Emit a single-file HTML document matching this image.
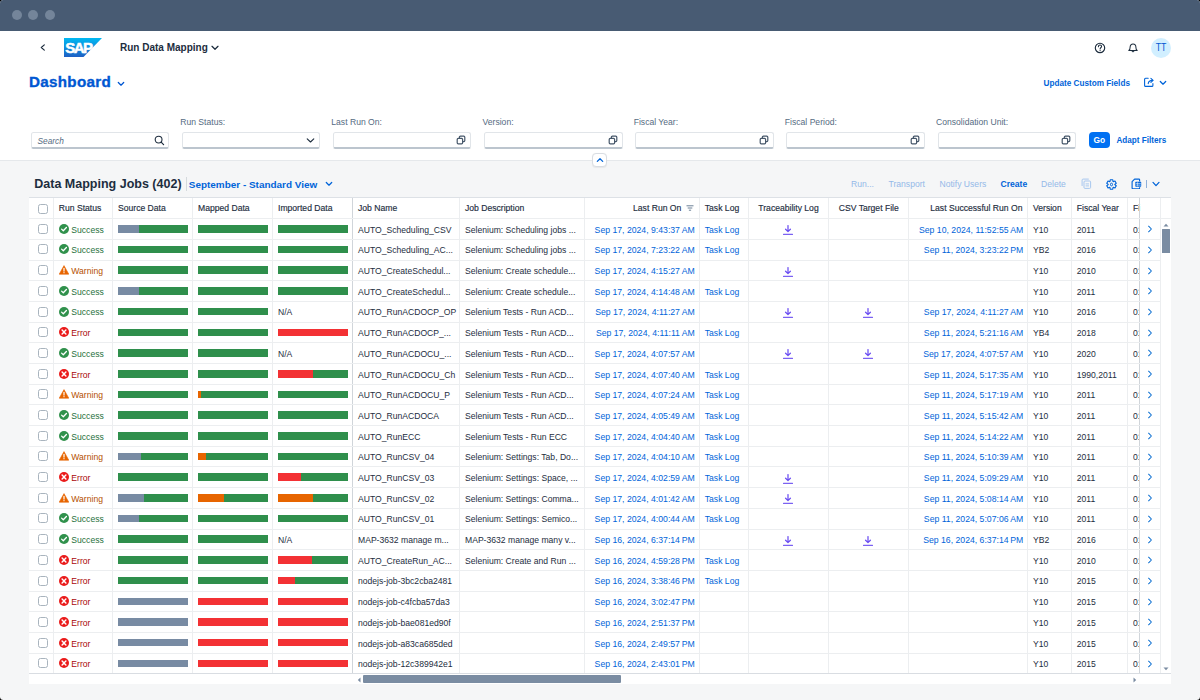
<!DOCTYPE html>
<html><head><meta charset="utf-8">
<style>
*{box-sizing:border-box;margin:0;padding:0}
html,body{width:1200px;height:700px;overflow:hidden;background:#000}
body{font-family:"Liberation Sans",sans-serif;color:#1d2d3e;position:relative}
#win{position:absolute;left:0;top:0;width:1200px;height:700px;border-radius:3.5px;overflow:hidden;background:#f5f6f7}
.a{position:absolute;white-space:nowrap}
#tbar{position:absolute;left:0;top:0;width:1200px;height:31px;background:#485b73}
.dot{position:absolute;top:9.8px;width:10px;height:10px;border-radius:50%;background:#74859a}
#shell{position:absolute;left:0;top:31px;width:1200px;height:130px;background:#fff;border-bottom:1px solid #e5e8eb}
.lbl{position:absolute;top:117.3px;font-size:8.6px;color:#556b82;white-space:nowrap}
.inp{position:absolute;top:132px;height:16.8px;width:138.5px;background:#fff;border:1px solid #e1e5e9;border-bottom:2px solid #bcc5ce;border-radius:2.5px}
.inp svg{position:absolute}
#card{position:absolute;left:29px;top:196.8px;width:1142.3px;height:487.2px;background:#fff}
#toolbarbg{position:absolute;left:29px;top:170px;width:1142px;height:27.5px;background:#f5f6f7}
.row{position:absolute;left:29px;width:1142px}
.thead{position:absolute;left:29px;width:1142px;background:#fff;border-top:1px solid #dde1e6}
.ht{position:absolute;height:20.7px;line-height:20.7px;font-size:8.6px;color:#1d2d3e;white-space:nowrap;-webkit-text-stroke:0.15px #1d2d3e}
.ht.r{text-align:right}
.ht.c{text-align:center}
.fil{position:absolute;width:8px;height:6px}
.cb{position:absolute;width:10px;height:10px;border:1px solid #a9b4be;border-radius:2.5px;background:#fff}
.st{position:absolute;top:1.5px;height:20.69px;line-height:21.5px;font-size:8.6px;white-space:nowrap;padding-left:12.6px}
.st .si{position:absolute;left:0;top:4.1px;width:10px;height:10px}
.ok{color:#256f3a}.er{color:#aa0808}.wa{color:#b44f00}
.bar{position:absolute;top:6.9px;width:69.6px;height:7.6px;display:flex}
.bar i{display:block;height:100%}
.tx{position:absolute;top:1.5px;height:20.69px;line-height:21.5px;font-size:8.6px;white-space:nowrap;color:#1d2d3e}
.tx.r{text-align:right}
.dt{font-size:8.68px}
.lk{color:#0064d9}
.clip{overflow:hidden}
.dlw{position:absolute;top:7.1px;width:10px;height:10px}
.dl{width:10px;height:10px;display:block}
.nav{position:absolute;top:7px;width:6px;height:8px}
.vl{position:absolute;top:197.5px;height:476px;width:1px;background:#eceef0}
.vd{background:#d0d5da}
.hl{position:absolute;left:29px;width:1142px;height:1px;background:#eceef0}
</style></head><body>
<div id="win">
<div id="tbar">
 <div class="dot" style="left:11.75px"></div>
 <div class="dot" style="left:28.1px"></div>
 <div class="dot" style="left:44.6px"></div>
</div>
<div id="shell">
 <!-- back chevron -->
 <svg class="a" style="left:39px;top:11px" width="8" height="10" viewBox="0 0 8 10"><path d="M5.3 2.9 L2.3 5.5 L5.3 8.1" stroke="#1d2d3e" stroke-width="1.2" fill="none" stroke-linecap="round" stroke-linejoin="round"/></svg>
 <!-- SAP logo -->
 <svg class="a" style="left:64px;top:7px" width="38" height="19" viewBox="0 0 38 19">
  <defs><linearGradient id="sg" x1="0" y1="0" x2="0" y2="1"><stop offset="0" stop-color="#00b9f2"/><stop offset="1" stop-color="#1e5fc4"/></linearGradient></defs>
  <path d="M0 0 H38 L19.5 19 H0 Z" fill="url(#sg)"/>
  <text x="1.2" y="15.1" font-family="Liberation Sans" font-weight="bold" font-size="15" fill="#fff" stroke="#fff" stroke-width="0.5" letter-spacing="-1.5">SAP</text>
 </svg>
 <div class="a" style="left:120px;top:11.3px;font-size:10px;font-weight:bold;color:#1d2d3e">Run Data Mapping</div>
 <svg class="a" style="left:211px;top:14px" width="8" height="6" viewBox="0 0 8 6"><path d="M1 1.3 L4 4.3 L7 1.3" stroke="#1d2d3e" stroke-width="1.25" fill="none" stroke-linecap="round" stroke-linejoin="round"/></svg>
 <!-- help -->
 <svg class="a" style="left:1094px;top:11px" width="12" height="12" viewBox="0 0 12 12"><circle cx="6" cy="5.9" r="4.7" stroke="#1d2d3e" stroke-width="1.15" fill="none"/><path d="M4.4 4.7 C4.4 3.5 5.2 3 6 3 C6.9 3 7.6 3.6 7.6 4.5 C7.6 5.5 6.1 5.6 6.1 7" stroke="#1d2d3e" stroke-width="1.05" fill="none" stroke-linecap="round"/><circle cx="6.1" cy="8.6" r="0.65" fill="#1d2d3e"/></svg>
 <!-- bell -->
 <svg class="a" style="left:1127px;top:11px" width="12" height="12" viewBox="0 0 12 12"><path d="M1.8 8.5 C2.9 7.8 3.1 6.9 3.1 5.2 C3.1 3.2 4.3 1.9 6 1.9 C7.7 1.9 8.9 3.2 8.9 5.2 C8.9 6.9 9.1 7.8 10.2 8.5 Z" stroke="#1d2d3e" stroke-width="1.05" fill="none" stroke-linejoin="round"/><path d="M4.8 9.2 C5.1 10.4 6.9 10.4 7.2 9.2 Z" fill="#1d2d3e" stroke="#1d2d3e" stroke-width="0.4"/></svg>
 <div class="a" style="left:1151.2px;top:6.6px;width:20px;height:20px;border-radius:50%;background:#d1efff;color:#0057d2;font-size:10px;text-align:center;line-height:20px"><span style="display:inline-block;transform:scaleX(0.88)">TT</span></div>

 <div class="a" style="left:29px;top:42.3px;font-size:15.2px;font-weight:bold;color:#0057d2;letter-spacing:0.3px;-webkit-text-stroke:0.35px #0057d2">Dashboard</div>
 <svg class="a" style="left:117.3px;top:50px" width="8" height="6" viewBox="0 0 8 6"><path d="M1.3 1.5 L4 4.2 L6.7 1.5" stroke="#0057d2" stroke-width="1.25" fill="none" stroke-linecap="round" stroke-linejoin="round"/></svg>

 <div class="a" style="left:1043.5px;top:47.8px;font-size:8.2px;font-weight:bold;color:#0064d9">Update Custom Fields</div>
 <svg class="a" style="left:1143px;top:45px" width="12" height="12" viewBox="0 0 12 12"><path d="M5.2 2.3 H2.6 Q1.6 2.3 1.6 3.3 V9.4 Q1.6 10.4 2.6 10.4 H8.9 Q9.9 10.4 9.9 9.4 V7.6" stroke="#0064d9" stroke-width="1.1" fill="none" stroke-linecap="round"/><path d="M5.2 7.6 Q5.6 4.4 9.6 4.4" stroke="#0064d9" stroke-width="1.1" fill="none" stroke-linecap="round"/><path d="M7.9 2.4 L10.1 4.4 L7.9 6.4" stroke="#0064d9" stroke-width="1.1" fill="none" stroke-linecap="round" stroke-linejoin="round"/></svg>
 <svg class="a" style="left:1158.7px;top:48.8px" width="8" height="6" viewBox="0 0 8 6"><path d="M1.3 1.5 L4 4.2 L6.7 1.5" stroke="#0064d9" stroke-width="1.25" fill="none" stroke-linecap="round" stroke-linejoin="round"/></svg>
</div>

<!-- filter labels/inputs (page coords) -->
<div class="lbl" style="left:180.2px">Run Status:</div>
<div class="lbl" style="left:331.3px">Last Run On:</div>
<div class="lbl" style="left:482.5px">Version:</div>
<div class="lbl" style="left:633.7px">Fiscal Year:</div>
<div class="lbl" style="left:784.8px">Fiscal Period:</div>
<div class="lbl" style="left:936px">Consolidation Unit:</div>

<div class="inp" style="left:30.5px"><div class="a" style="left:6px;top:2.5px;font-size:8.3px;font-style:italic;color:#556b82">Search</div>
 <svg style="left:122px;top:2.2px" width="11" height="11" viewBox="0 0 11 11"><circle cx="4.6" cy="4.6" r="3.4" stroke="#1d2d3e" stroke-width="1.1" fill="none"/><path d="M7.1 7.1 L9.6 9.6" stroke="#1d2d3e" stroke-width="1.2" stroke-linecap="round"/></svg></div>
<div class="inp" style="left:181.6px"><svg style="left:123px;top:3.5px" width="9" height="7" viewBox="0 0 9 7"><path d="M1.2 1.8 L4.5 5 L7.8 1.8" stroke="#1d2d3e" stroke-width="1.1" fill="none" stroke-linecap="round" stroke-linejoin="round"/></svg></div>
<div class="inp" style="left:332.8px"></div>
<div class="inp" style="left:484px"></div>
<div class="inp" style="left:635.2px"></div>
<div class="inp" style="left:786.4px"></div>
<div class="inp" style="left:937.6px"></div>
<svg class="a" style="left:456.3px;top:134.8px" width="10" height="10" viewBox="0 0 10 10"><rect x="1.2" y="3.4" width="5.4" height="5.4" rx="1" stroke="#46576a" stroke-width="1.2" fill="none"/><path d="M3.4 3.4 V2.2 Q3.4 1.2 4.4 1.2 H7.8 Q8.8 1.2 8.8 2.2 V5.6 Q8.8 6.6 7.8 6.6 H6.6" stroke="#46576a" stroke-width="1.2" fill="none"/></svg><svg class="a" style="left:607.5px;top:134.8px" width="10" height="10" viewBox="0 0 10 10"><rect x="1.2" y="3.4" width="5.4" height="5.4" rx="1" stroke="#46576a" stroke-width="1.2" fill="none"/><path d="M3.4 3.4 V2.2 Q3.4 1.2 4.4 1.2 H7.8 Q8.8 1.2 8.8 2.2 V5.6 Q8.8 6.6 7.8 6.6 H6.6" stroke="#46576a" stroke-width="1.2" fill="none"/></svg><svg class="a" style="left:758.7px;top:134.8px" width="10" height="10" viewBox="0 0 10 10"><rect x="1.2" y="3.4" width="5.4" height="5.4" rx="1" stroke="#46576a" stroke-width="1.2" fill="none"/><path d="M3.4 3.4 V2.2 Q3.4 1.2 4.4 1.2 H7.8 Q8.8 1.2 8.8 2.2 V5.6 Q8.8 6.6 7.8 6.6 H6.6" stroke="#46576a" stroke-width="1.2" fill="none"/></svg><svg class="a" style="left:909.9px;top:134.8px" width="10" height="10" viewBox="0 0 10 10"><rect x="1.2" y="3.4" width="5.4" height="5.4" rx="1" stroke="#46576a" stroke-width="1.2" fill="none"/><path d="M3.4 3.4 V2.2 Q3.4 1.2 4.4 1.2 H7.8 Q8.8 1.2 8.8 2.2 V5.6 Q8.8 6.6 7.8 6.6 H6.6" stroke="#46576a" stroke-width="1.2" fill="none"/></svg><svg class="a" style="left:1061.1px;top:134.8px" width="10" height="10" viewBox="0 0 10 10"><rect x="1.2" y="3.4" width="5.4" height="5.4" rx="1" stroke="#46576a" stroke-width="1.2" fill="none"/><path d="M3.4 3.4 V2.2 Q3.4 1.2 4.4 1.2 H7.8 Q8.8 1.2 8.8 2.2 V5.6 Q8.8 6.6 7.8 6.6 H6.6" stroke="#46576a" stroke-width="1.2" fill="none"/></svg>
<div class="a" style="left:1088.8px;top:132.1px;width:20.8px;height:16.2px;border-radius:4px;background:#0070f2;color:#fff;font-size:8.4px;font-weight:bold;text-align:center;line-height:16.2px">Go</div>
<div class="a" style="left:1116.5px;top:135.6px;font-size:8.15px;font-weight:bold;color:#0064d9">Adapt Filters</div>

<!-- collapse button -->
<div class="a" style="left:592.2px;top:152.5px;width:15px;height:14.8px;border-radius:4px;background:#fff;border:1px solid #d9dde2;box-shadow:0 0.5px 1px rgba(0,0,0,0.06)"></div>
<svg class="a" style="left:596px;top:156.5px" width="8" height="6" viewBox="0 0 8 6"><path d="M1.3 4.4 L4 1.7 L6.7 4.4" stroke="#0064d9" stroke-width="1.25" fill="none" stroke-linecap="round" stroke-linejoin="round"/></svg>

<!-- table card -->
<div id="card"></div>
<div class="a" style="left:34.3px;top:177.3px;font-size:12.5px;font-weight:bold;color:#1d2d3e">Data Mapping Jobs (402)</div>
<div class="a" style="left:185.5px;top:177px;width:1px;height:14px;background:#d5dadd"></div>
<div class="a" style="left:188.8px;top:179.4px;font-size:9.95px;font-weight:bold;color:#0064d9">September - Standard View</div>
<svg class="a" style="left:324.5px;top:180.5px" width="8" height="6" viewBox="0 0 8 6"><path d="M1.3 1.5 L4 4.2 L6.7 1.5" stroke="#0064d9" stroke-width="1.25" fill="none" stroke-linecap="round" stroke-linejoin="round"/></svg>

<div class="a" style="left:851px;top:179px;font-size:8.6px;color:#94b9e8">Run...</div>
<div class="a" style="left:888.5px;top:179px;font-size:8.6px;color:#94b9e8">Transport</div>
<div class="a" style="left:939.5px;top:179px;font-size:8.6px;color:#94b9e8">Notify Users</div>
<div class="a" style="left:1000.5px;top:179px;font-size:8.6px;font-weight:bold;color:#0064d9">Create</div>
<div class="a" style="left:1041px;top:179px;font-size:8.6px;color:#94b9e8">Delete</div>
<svg class="a" style="left:1081px;top:178px" width="11" height="11" viewBox="0 0 11 11"><path d="M1.1 7.6 V2.1 Q1.1 1.1 2.1 1.1 H7.4" stroke="#a3c5ee" stroke-width="0.95" fill="none" stroke-linecap="round"/><rect x="3" y="3" width="6.6" height="7.4" rx="1" stroke="#a3c5ee" stroke-width="0.95" fill="none"/><path d="M5 5.9 H7.6 M5 7.9 H7.6" stroke="#a3c5ee" stroke-width="0.9" stroke-linecap="round"/></svg><svg class="a" style="left:1106px;top:178.5px" width="11" height="11" viewBox="0 0 11 11"><path d="M3.92 2.60 L4.24 0.76 L6.76 0.76 L7.08 2.60 L7.22 2.68 L8.97 2.04 L10.23 4.22 L8.80 5.42 L8.80 5.58 L10.23 6.78 L8.97 8.96 L7.22 8.32 L7.08 8.40 L6.76 10.24 L4.24 10.24 L3.92 8.40 L3.78 8.32 L2.03 8.96 L0.77 6.78 L2.20 5.58 L2.20 5.42 L0.77 4.22 L2.03 2.04 L3.78 2.68 Z" stroke="#0064d9" stroke-width="1.15" fill="none" stroke-linejoin="round"/><ellipse cx="5.5" cy="5.5" rx="1.05" ry="1.35" stroke="#0064d9" stroke-width="1" fill="none"/></svg><svg class="a" style="left:1131px;top:178px" width="11" height="11" viewBox="0 0 11 11"><path d="M8.6 3.4 V1.8 Q8.6 1.1 7.9 1.1 H3.6 L1.1 3.6 V10 Q1.1 10.7 1.8 10.7 H7.9 Q8.6 10.7 8.6 10 V9.2" stroke="#0064d9" stroke-width="1.15" fill="none" stroke-linejoin="round"/><rect x="4.3" y="3.8" width="5.9" height="4.9" rx="0.6" fill="#0064d9"/><path d="M4.8 5.45 H9.8 M4.8 7.1 H9.8 M6.6 4.2 V8.4" stroke="#fff" stroke-width="0.55"/></svg><div class="a" style="left:1146.1px;top:180.3px;width:0.75px;height:8px;background:#8fb0da"></div><svg class="a" style="left:1152.3px;top:180.8px" width="8" height="6" viewBox="0 0 8 6"><path d="M1 1.4 L4 4.6 L7 1.4" stroke="#0064d9" stroke-width="1.25" fill="none" stroke-linecap="round" stroke-linejoin="round"/></svg>

<div class="thead" style="top:196.8px;height:21.399999999999988px"></div><div class="cb" style="left:38px;top:203.7px"></div><div class="ht" style="left:58.8px;top:197.5px">Run Status</div><div class="ht" style="left:118.0px;top:197.5px">Source Data</div><div class="ht" style="left:198.0px;top:197.5px">Mapped Data</div><div class="ht" style="left:278.0px;top:197.5px">Imported Data</div><div class="ht" style="left:358.0px;top:197.5px">Job Name</div><div class="ht" style="left:465.0px;top:197.5px">Job Description</div><div class="ht r" style="left:584.5px;width:96.79999999999995px;top:197.5px">Last Run On</div><svg class="fil" style="left:685.8px;top:205.0px" viewBox="0 0 8 6"><path d="M0.5 0.8 H7.5 M1.7 3 H6.3 M2.9 5.2 H5.1" stroke="#5b738b" stroke-width="0.9"/></svg><div class="ht" style="left:704.8px;top:197.5px">Task Log</div><div class="ht c" style="left:748.25px;width:80.5px;top:197.5px">Traceability Log</div><div class="ht c" style="left:828.75px;width:80.0px;top:197.5px">CSV Target File</div><div class="ht r" style="left:908.75px;width:113.75px;top:197.5px">Last Successful Run On</div><div class="ht" style="left:1033.0px;top:197.5px">Version</div><div class="ht" style="left:1076.75px;top:197.5px">Fiscal Year</div><div class="ht" style="left:1133.0px;top:197.5px">Fi</div><div class="row" style="top:218.2px;height:20.69px"><div class="cb" style="left:9px;top:5.6px"></div><div class="st ok" style="left:29.7px"><svg class="si" viewBox="0 0 10 10"><circle cx="5" cy="5" r="5" fill="#30914c"/><path d="M2.6 5.1 L4.3 6.7 L7.4 3.5" stroke="#fff" stroke-width="1.3" fill="none" stroke-linecap="round" stroke-linejoin="round"/></svg>Success</div><div class="bar" style="left:89.0px"><i style="width:30%;background:#788ba3"></i><i style="width:70%;background:#2f8f4c"></i></div><div class="bar" style="left:169.0px"><i style="width:100%;background:#2f8f4c"></i></div><div class="bar" style="left:249.0px"><i style="width:100%;background:#2f8f4c"></i></div><div class="tx" style="left:329.0px">AUTO_Scheduling_CSV</div><div class="tx" style="left:436.0px">Selenium: Scheduling jobs ...</div><div class="tx lk r dt" style="left:555.5px;width:110.19999999999996px">Sep 17, 2024, 9:43:37&#8239;AM</div><div class="tx lk" style="left:675.8px">Task Log</div><div class="dlw" style="left:754.0px"><svg class="dl" viewBox="0 0 10 10"><path d="M5 0.6 V6.4 M2.6 4.2 L5 6.6 L7.4 4.2" stroke="#6c4ff2" stroke-width="1.25" fill="none" stroke-linecap="round" stroke-linejoin="round"/><path d="M0.5 9.4 H9.5" stroke="#7b62f2" stroke-width="1.1" stroke-linecap="round"/></svg></div><div class="tx lk r dt" style="left:879.75px;width:114.55px">Sep 10, 2024, 11:52:55&#8239;AM</div><div class="tx" style="left:1004.0px">Y10</div><div class="tx" style="left:1047.75px">2011</div><div class="tx clip" style="left:1104.0px;width:6.5px">01</div><svg class="nav" style="left:1118.1px" viewBox="0 0 6 8"><path d="M1.6 1.2 L4.4 4 L1.6 6.8" stroke="#0a6ed1" stroke-width="1.05" fill="none" stroke-linecap="round" stroke-linejoin="round"/></svg></div><div class="row" style="top:238.89px;height:20.69px"><div class="cb" style="left:9px;top:5.6px"></div><div class="st ok" style="left:29.7px"><svg class="si" viewBox="0 0 10 10"><circle cx="5" cy="5" r="5" fill="#30914c"/><path d="M2.6 5.1 L4.3 6.7 L7.4 3.5" stroke="#fff" stroke-width="1.3" fill="none" stroke-linecap="round" stroke-linejoin="round"/></svg>Success</div><div class="bar" style="left:89.0px"><i style="width:100%;background:#2f8f4c"></i></div><div class="bar" style="left:169.0px"><i style="width:100%;background:#2f8f4c"></i></div><div class="bar" style="left:249.0px"><i style="width:100%;background:#2f8f4c"></i></div><div class="tx" style="left:329.0px">AUTO_Scheduling_AC...</div><div class="tx" style="left:436.0px">Selenium: Scheduling jobs ...</div><div class="tx lk r dt" style="left:555.5px;width:110.19999999999996px">Sep 17, 2024, 7:23:22&#8239;AM</div><div class="tx lk" style="left:675.8px">Task Log</div><div class="tx lk r dt" style="left:879.75px;width:114.55px">Sep 11, 2024, 3:23:22&#8239;PM</div><div class="tx" style="left:1004.0px">YB2</div><div class="tx" style="left:1047.75px">2016</div><div class="tx clip" style="left:1104.0px;width:6.5px">01</div><svg class="nav" style="left:1118.1px" viewBox="0 0 6 8"><path d="M1.6 1.2 L4.4 4 L1.6 6.8" stroke="#0a6ed1" stroke-width="1.05" fill="none" stroke-linecap="round" stroke-linejoin="round"/></svg></div><div class="row" style="top:259.58px;height:20.69px"><div class="cb" style="left:9px;top:5.6px"></div><div class="st wa" style="left:29.7px"><svg class="si" viewBox="0 0 10 10"><path d="M5 0.6 L9.8 9.2 L0.2 9.2 Z" fill="#e76500" stroke="#e76500" stroke-width="0.6" stroke-linejoin="round"/><path d="M5 3.4 L5 6.1" stroke="#fff" stroke-width="1.2" stroke-linecap="round"/><circle cx="5" cy="7.7" r="0.65" fill="#fff"/></svg>Warning</div><div class="bar" style="left:89.0px"><i style="width:100%;background:#2f8f4c"></i></div><div class="bar" style="left:169.0px"><i style="width:100%;background:#2f8f4c"></i></div><div class="bar" style="left:249.0px"><i style="width:100%;background:#2f8f4c"></i></div><div class="tx" style="left:329.0px">AUTO_CreateSchedul...</div><div class="tx" style="left:436.0px">Selenium: Create schedule...</div><div class="tx lk r dt" style="left:555.5px;width:110.19999999999996px">Sep 17, 2024, 4:15:27&#8239;AM</div><div class="dlw" style="left:754.0px"><svg class="dl" viewBox="0 0 10 10"><path d="M5 0.6 V6.4 M2.6 4.2 L5 6.6 L7.4 4.2" stroke="#6c4ff2" stroke-width="1.25" fill="none" stroke-linecap="round" stroke-linejoin="round"/><path d="M0.5 9.4 H9.5" stroke="#7b62f2" stroke-width="1.1" stroke-linecap="round"/></svg></div><div class="tx" style="left:1004.0px">Y10</div><div class="tx" style="left:1047.75px">2010</div><div class="tx clip" style="left:1104.0px;width:6.5px">01</div><svg class="nav" style="left:1118.1px" viewBox="0 0 6 8"><path d="M1.6 1.2 L4.4 4 L1.6 6.8" stroke="#0a6ed1" stroke-width="1.05" fill="none" stroke-linecap="round" stroke-linejoin="round"/></svg></div><div class="row" style="top:280.27px;height:20.69px"><div class="cb" style="left:9px;top:5.6px"></div><div class="st ok" style="left:29.7px"><svg class="si" viewBox="0 0 10 10"><circle cx="5" cy="5" r="5" fill="#30914c"/><path d="M2.6 5.1 L4.3 6.7 L7.4 3.5" stroke="#fff" stroke-width="1.3" fill="none" stroke-linecap="round" stroke-linejoin="round"/></svg>Success</div><div class="bar" style="left:89.0px"><i style="width:30%;background:#788ba3"></i><i style="width:70%;background:#2f8f4c"></i></div><div class="bar" style="left:169.0px"><i style="width:100%;background:#2f8f4c"></i></div><div class="bar" style="left:249.0px"><i style="width:100%;background:#2f8f4c"></i></div><div class="tx" style="left:329.0px">AUTO_CreateSchedul...</div><div class="tx" style="left:436.0px">Selenium: Create schedule...</div><div class="tx lk r dt" style="left:555.5px;width:110.19999999999996px">Sep 17, 2024, 4:14:48&#8239;AM</div><div class="tx lk" style="left:675.8px">Task Log</div><div class="tx" style="left:1004.0px">Y10</div><div class="tx" style="left:1047.75px">2011</div><div class="tx clip" style="left:1104.0px;width:6.5px">01</div><svg class="nav" style="left:1118.1px" viewBox="0 0 6 8"><path d="M1.6 1.2 L4.4 4 L1.6 6.8" stroke="#0a6ed1" stroke-width="1.05" fill="none" stroke-linecap="round" stroke-linejoin="round"/></svg></div><div class="row" style="top:300.96px;height:20.69px"><div class="cb" style="left:9px;top:5.6px"></div><div class="st ok" style="left:29.7px"><svg class="si" viewBox="0 0 10 10"><circle cx="5" cy="5" r="5" fill="#30914c"/><path d="M2.6 5.1 L4.3 6.7 L7.4 3.5" stroke="#fff" stroke-width="1.3" fill="none" stroke-linecap="round" stroke-linejoin="round"/></svg>Success</div><div class="bar" style="left:89.0px"><i style="width:100%;background:#2f8f4c"></i></div><div class="bar" style="left:169.0px"><i style="width:100%;background:#2f8f4c"></i></div><div class="tx" style="left:249.0px">N/A</div><div class="tx" style="left:329.0px">AUTO_RunACDOCP_OP</div><div class="tx" style="left:436.0px">Selenium Tests - Run ACD...</div><div class="tx lk r dt" style="left:555.5px;width:110.19999999999996px">Sep 17, 2024, 4:11:27&#8239;AM</div><div class="dlw" style="left:754.0px"><svg class="dl" viewBox="0 0 10 10"><path d="M5 0.6 V6.4 M2.6 4.2 L5 6.6 L7.4 4.2" stroke="#6c4ff2" stroke-width="1.25" fill="none" stroke-linecap="round" stroke-linejoin="round"/><path d="M0.5 9.4 H9.5" stroke="#7b62f2" stroke-width="1.1" stroke-linecap="round"/></svg></div><div class="dlw" style="left:834.25px"><svg class="dl" viewBox="0 0 10 10"><path d="M5 0.6 V6.4 M2.6 4.2 L5 6.6 L7.4 4.2" stroke="#6c4ff2" stroke-width="1.25" fill="none" stroke-linecap="round" stroke-linejoin="round"/><path d="M0.5 9.4 H9.5" stroke="#7b62f2" stroke-width="1.1" stroke-linecap="round"/></svg></div><div class="tx lk r dt" style="left:879.75px;width:114.55px">Sep 17, 2024, 4:11:27&#8239;AM</div><div class="tx" style="left:1004.0px">Y10</div><div class="tx" style="left:1047.75px">2016</div><div class="tx clip" style="left:1104.0px;width:6.5px">01</div><svg class="nav" style="left:1118.1px" viewBox="0 0 6 8"><path d="M1.6 1.2 L4.4 4 L1.6 6.8" stroke="#0a6ed1" stroke-width="1.05" fill="none" stroke-linecap="round" stroke-linejoin="round"/></svg></div><div class="row" style="top:321.65px;height:20.69px"><div class="cb" style="left:9px;top:5.6px"></div><div class="st er" style="left:29.7px"><svg class="si" viewBox="0 0 10 10"><circle cx="5" cy="5" r="5" fill="#ea1b1b"/><path d="M3.1 3.1 L6.9 6.9 M6.9 3.1 L3.1 6.9" stroke="#fff" stroke-width="1.45" fill="none" stroke-linecap="round"/></svg>Error</div><div class="bar" style="left:89.0px"><i style="width:100%;background:#2f8f4c"></i></div><div class="bar" style="left:169.0px"><i style="width:100%;background:#2f8f4c"></i></div><div class="bar" style="left:249.0px"><i style="width:100%;background:#f33134"></i></div><div class="tx" style="left:329.0px">AUTO_RunACDOCP_...</div><div class="tx" style="left:436.0px">Selenium Tests - Run ACD...</div><div class="tx lk r dt" style="left:555.5px;width:110.19999999999996px">Sep 17, 2024, 4:11:11&#8239;AM</div><div class="tx lk" style="left:675.8px">Task Log</div><div class="tx lk r dt" style="left:879.75px;width:114.55px">Sep 11, 2024, 5:21:16&#8239;AM</div><div class="tx" style="left:1004.0px">YB4</div><div class="tx" style="left:1047.75px">2018</div><div class="tx clip" style="left:1104.0px;width:6.5px">01</div><svg class="nav" style="left:1118.1px" viewBox="0 0 6 8"><path d="M1.6 1.2 L4.4 4 L1.6 6.8" stroke="#0a6ed1" stroke-width="1.05" fill="none" stroke-linecap="round" stroke-linejoin="round"/></svg></div><div class="row" style="top:342.34000000000003px;height:20.69px"><div class="cb" style="left:9px;top:5.6px"></div><div class="st ok" style="left:29.7px"><svg class="si" viewBox="0 0 10 10"><circle cx="5" cy="5" r="5" fill="#30914c"/><path d="M2.6 5.1 L4.3 6.7 L7.4 3.5" stroke="#fff" stroke-width="1.3" fill="none" stroke-linecap="round" stroke-linejoin="round"/></svg>Success</div><div class="bar" style="left:89.0px"><i style="width:100%;background:#2f8f4c"></i></div><div class="bar" style="left:169.0px"><i style="width:100%;background:#2f8f4c"></i></div><div class="tx" style="left:249.0px">N/A</div><div class="tx" style="left:329.0px">AUTO_RunACDOCU_...</div><div class="tx" style="left:436.0px">Selenium Tests - Run ACD...</div><div class="tx lk r dt" style="left:555.5px;width:110.19999999999996px">Sep 17, 2024, 4:07:57&#8239;AM</div><div class="dlw" style="left:754.0px"><svg class="dl" viewBox="0 0 10 10"><path d="M5 0.6 V6.4 M2.6 4.2 L5 6.6 L7.4 4.2" stroke="#6c4ff2" stroke-width="1.25" fill="none" stroke-linecap="round" stroke-linejoin="round"/><path d="M0.5 9.4 H9.5" stroke="#7b62f2" stroke-width="1.1" stroke-linecap="round"/></svg></div><div class="dlw" style="left:834.25px"><svg class="dl" viewBox="0 0 10 10"><path d="M5 0.6 V6.4 M2.6 4.2 L5 6.6 L7.4 4.2" stroke="#6c4ff2" stroke-width="1.25" fill="none" stroke-linecap="round" stroke-linejoin="round"/><path d="M0.5 9.4 H9.5" stroke="#7b62f2" stroke-width="1.1" stroke-linecap="round"/></svg></div><div class="tx lk r dt" style="left:879.75px;width:114.55px">Sep 17, 2024, 4:07:57&#8239;AM</div><div class="tx" style="left:1004.0px">Y10</div><div class="tx" style="left:1047.75px">2020</div><div class="tx clip" style="left:1104.0px;width:6.5px">01</div><svg class="nav" style="left:1118.1px" viewBox="0 0 6 8"><path d="M1.6 1.2 L4.4 4 L1.6 6.8" stroke="#0a6ed1" stroke-width="1.05" fill="none" stroke-linecap="round" stroke-linejoin="round"/></svg></div><div class="row" style="top:363.03px;height:20.69px"><div class="cb" style="left:9px;top:5.6px"></div><div class="st er" style="left:29.7px"><svg class="si" viewBox="0 0 10 10"><circle cx="5" cy="5" r="5" fill="#ea1b1b"/><path d="M3.1 3.1 L6.9 6.9 M6.9 3.1 L3.1 6.9" stroke="#fff" stroke-width="1.45" fill="none" stroke-linecap="round"/></svg>Error</div><div class="bar" style="left:89.0px"><i style="width:100%;background:#2f8f4c"></i></div><div class="bar" style="left:169.0px"><i style="width:100%;background:#2f8f4c"></i></div><div class="bar" style="left:249.0px"><i style="width:50%;background:#f33134"></i><i style="width:50%;background:#2f8f4c"></i></div><div class="tx" style="left:329.0px">AUTO_RunACDOCU_Ch</div><div class="tx" style="left:436.0px">Selenium Tests - Run ACD...</div><div class="tx lk r dt" style="left:555.5px;width:110.19999999999996px">Sep 17, 2024, 4:07:40&#8239;AM</div><div class="tx lk" style="left:675.8px">Task Log</div><div class="tx lk r dt" style="left:879.75px;width:114.55px">Sep 11, 2024, 5:17:35&#8239;AM</div><div class="tx" style="left:1004.0px">Y10</div><div class="tx" style="left:1047.75px">1990,2011</div><div class="tx clip" style="left:1104.0px;width:6.5px">01</div><svg class="nav" style="left:1118.1px" viewBox="0 0 6 8"><path d="M1.6 1.2 L4.4 4 L1.6 6.8" stroke="#0a6ed1" stroke-width="1.05" fill="none" stroke-linecap="round" stroke-linejoin="round"/></svg></div><div class="row" style="top:383.72px;height:20.69px"><div class="cb" style="left:9px;top:5.6px"></div><div class="st wa" style="left:29.7px"><svg class="si" viewBox="0 0 10 10"><path d="M5 0.6 L9.8 9.2 L0.2 9.2 Z" fill="#e76500" stroke="#e76500" stroke-width="0.6" stroke-linejoin="round"/><path d="M5 3.4 L5 6.1" stroke="#fff" stroke-width="1.2" stroke-linecap="round"/><circle cx="5" cy="7.7" r="0.65" fill="#fff"/></svg>Warning</div><div class="bar" style="left:89.0px"><i style="width:100%;background:#2f8f4c"></i></div><div class="bar" style="left:169.0px"><i style="width:4%;background:#e76500"></i><i style="width:96%;background:#2f8f4c"></i></div><div class="bar" style="left:249.0px"><i style="width:100%;background:#2f8f4c"></i></div><div class="tx" style="left:329.0px">AUTO_RunACDOCU_P</div><div class="tx" style="left:436.0px">Selenium Tests - Run ACD...</div><div class="tx lk r dt" style="left:555.5px;width:110.19999999999996px">Sep 17, 2024, 4:07:24&#8239;AM</div><div class="tx lk" style="left:675.8px">Task Log</div><div class="tx lk r dt" style="left:879.75px;width:114.55px">Sep 11, 2024, 5:17:19&#8239;AM</div><div class="tx" style="left:1004.0px">Y10</div><div class="tx" style="left:1047.75px">2011</div><div class="tx clip" style="left:1104.0px;width:6.5px">01</div><svg class="nav" style="left:1118.1px" viewBox="0 0 6 8"><path d="M1.6 1.2 L4.4 4 L1.6 6.8" stroke="#0a6ed1" stroke-width="1.05" fill="none" stroke-linecap="round" stroke-linejoin="round"/></svg></div><div class="row" style="top:404.40999999999997px;height:20.69px"><div class="cb" style="left:9px;top:5.6px"></div><div class="st ok" style="left:29.7px"><svg class="si" viewBox="0 0 10 10"><circle cx="5" cy="5" r="5" fill="#30914c"/><path d="M2.6 5.1 L4.3 6.7 L7.4 3.5" stroke="#fff" stroke-width="1.3" fill="none" stroke-linecap="round" stroke-linejoin="round"/></svg>Success</div><div class="bar" style="left:89.0px"><i style="width:100%;background:#2f8f4c"></i></div><div class="bar" style="left:169.0px"><i style="width:100%;background:#2f8f4c"></i></div><div class="bar" style="left:249.0px"><i style="width:100%;background:#2f8f4c"></i></div><div class="tx" style="left:329.0px">AUTO_RunACDOCA</div><div class="tx" style="left:436.0px">Selenium Tests - Run ACD...</div><div class="tx lk r dt" style="left:555.5px;width:110.19999999999996px">Sep 17, 2024, 4:05:49&#8239;AM</div><div class="tx lk" style="left:675.8px">Task Log</div><div class="tx lk r dt" style="left:879.75px;width:114.55px">Sep 11, 2024, 5:15:42&#8239;AM</div><div class="tx" style="left:1004.0px">Y10</div><div class="tx" style="left:1047.75px">2011</div><div class="tx clip" style="left:1104.0px;width:6.5px">01</div><svg class="nav" style="left:1118.1px" viewBox="0 0 6 8"><path d="M1.6 1.2 L4.4 4 L1.6 6.8" stroke="#0a6ed1" stroke-width="1.05" fill="none" stroke-linecap="round" stroke-linejoin="round"/></svg></div><div class="row" style="top:425.1px;height:20.69px"><div class="cb" style="left:9px;top:5.6px"></div><div class="st ok" style="left:29.7px"><svg class="si" viewBox="0 0 10 10"><circle cx="5" cy="5" r="5" fill="#30914c"/><path d="M2.6 5.1 L4.3 6.7 L7.4 3.5" stroke="#fff" stroke-width="1.3" fill="none" stroke-linecap="round" stroke-linejoin="round"/></svg>Success</div><div class="bar" style="left:89.0px"><i style="width:100%;background:#2f8f4c"></i></div><div class="bar" style="left:169.0px"><i style="width:100%;background:#2f8f4c"></i></div><div class="bar" style="left:249.0px"><i style="width:100%;background:#2f8f4c"></i></div><div class="tx" style="left:329.0px">AUTO_RunECC</div><div class="tx" style="left:436.0px">Selenium Tests - Run ECC</div><div class="tx lk r dt" style="left:555.5px;width:110.19999999999996px">Sep 17, 2024, 4:04:40&#8239;AM</div><div class="tx lk" style="left:675.8px">Task Log</div><div class="tx lk r dt" style="left:879.75px;width:114.55px">Sep 11, 2024, 5:14:22&#8239;AM</div><div class="tx" style="left:1004.0px">Y10</div><div class="tx" style="left:1047.75px">2011</div><div class="tx clip" style="left:1104.0px;width:6.5px">01</div><svg class="nav" style="left:1118.1px" viewBox="0 0 6 8"><path d="M1.6 1.2 L4.4 4 L1.6 6.8" stroke="#0a6ed1" stroke-width="1.05" fill="none" stroke-linecap="round" stroke-linejoin="round"/></svg></div><div class="row" style="top:445.78999999999996px;height:20.69px"><div class="cb" style="left:9px;top:5.6px"></div><div class="st wa" style="left:29.7px"><svg class="si" viewBox="0 0 10 10"><path d="M5 0.6 L9.8 9.2 L0.2 9.2 Z" fill="#e76500" stroke="#e76500" stroke-width="0.6" stroke-linejoin="round"/><path d="M5 3.4 L5 6.1" stroke="#fff" stroke-width="1.2" stroke-linecap="round"/><circle cx="5" cy="7.7" r="0.65" fill="#fff"/></svg>Warning</div><div class="bar" style="left:89.0px"><i style="width:33%;background:#788ba3"></i><i style="width:67%;background:#2f8f4c"></i></div><div class="bar" style="left:169.0px"><i style="width:11%;background:#e76500"></i><i style="width:89%;background:#2f8f4c"></i></div><div class="bar" style="left:249.0px"><i style="width:100%;background:#2f8f4c"></i></div><div class="tx" style="left:329.0px">AUTO_RunCSV_04</div><div class="tx" style="left:436.0px">Selenium: Settings: Tab, Do...</div><div class="tx lk r dt" style="left:555.5px;width:110.19999999999996px">Sep 17, 2024, 4:04:10&#8239;AM</div><div class="tx lk" style="left:675.8px">Task Log</div><div class="tx lk r dt" style="left:879.75px;width:114.55px">Sep 11, 2024, 5:10:39&#8239;AM</div><div class="tx" style="left:1004.0px">Y10</div><div class="tx" style="left:1047.75px">2011</div><div class="tx clip" style="left:1104.0px;width:6.5px">01</div><svg class="nav" style="left:1118.1px" viewBox="0 0 6 8"><path d="M1.6 1.2 L4.4 4 L1.6 6.8" stroke="#0a6ed1" stroke-width="1.05" fill="none" stroke-linecap="round" stroke-linejoin="round"/></svg></div><div class="row" style="top:466.48px;height:20.69px"><div class="cb" style="left:9px;top:5.6px"></div><div class="st er" style="left:29.7px"><svg class="si" viewBox="0 0 10 10"><circle cx="5" cy="5" r="5" fill="#ea1b1b"/><path d="M3.1 3.1 L6.9 6.9 M6.9 3.1 L3.1 6.9" stroke="#fff" stroke-width="1.45" fill="none" stroke-linecap="round"/></svg>Error</div><div class="bar" style="left:89.0px"><i style="width:100%;background:#2f8f4c"></i></div><div class="bar" style="left:169.0px"><i style="width:100%;background:#2f8f4c"></i></div><div class="bar" style="left:249.0px"><i style="width:33%;background:#f33134"></i><i style="width:67%;background:#2f8f4c"></i></div><div class="tx" style="left:329.0px">AUTO_RunCSV_03</div><div class="tx" style="left:436.0px">Selenium: Settings: Space, ...</div><div class="tx lk r dt" style="left:555.5px;width:110.19999999999996px">Sep 17, 2024, 4:02:59&#8239;AM</div><div class="tx lk" style="left:675.8px">Task Log</div><div class="dlw" style="left:754.0px"><svg class="dl" viewBox="0 0 10 10"><path d="M5 0.6 V6.4 M2.6 4.2 L5 6.6 L7.4 4.2" stroke="#6c4ff2" stroke-width="1.25" fill="none" stroke-linecap="round" stroke-linejoin="round"/><path d="M0.5 9.4 H9.5" stroke="#7b62f2" stroke-width="1.1" stroke-linecap="round"/></svg></div><div class="tx lk r dt" style="left:879.75px;width:114.55px">Sep 11, 2024, 5:09:29&#8239;AM</div><div class="tx" style="left:1004.0px">Y10</div><div class="tx" style="left:1047.75px">2011</div><div class="tx clip" style="left:1104.0px;width:6.5px">01</div><svg class="nav" style="left:1118.1px" viewBox="0 0 6 8"><path d="M1.6 1.2 L4.4 4 L1.6 6.8" stroke="#0a6ed1" stroke-width="1.05" fill="none" stroke-linecap="round" stroke-linejoin="round"/></svg></div><div class="row" style="top:487.17px;height:20.69px"><div class="cb" style="left:9px;top:5.6px"></div><div class="st wa" style="left:29.7px"><svg class="si" viewBox="0 0 10 10"><path d="M5 0.6 L9.8 9.2 L0.2 9.2 Z" fill="#e76500" stroke="#e76500" stroke-width="0.6" stroke-linejoin="round"/><path d="M5 3.4 L5 6.1" stroke="#fff" stroke-width="1.2" stroke-linecap="round"/><circle cx="5" cy="7.7" r="0.65" fill="#fff"/></svg>Warning</div><div class="bar" style="left:89.0px"><i style="width:37%;background:#788ba3"></i><i style="width:63%;background:#2f8f4c"></i></div><div class="bar" style="left:169.0px"><i style="width:37%;background:#e76500"></i><i style="width:63%;background:#2f8f4c"></i></div><div class="bar" style="left:249.0px"><i style="width:50%;background:#e76500"></i><i style="width:50%;background:#2f8f4c"></i></div><div class="tx" style="left:329.0px">AUTO_RunCSV_02</div><div class="tx" style="left:436.0px">Selenium: Settings: Comma...</div><div class="tx lk r dt" style="left:555.5px;width:110.19999999999996px">Sep 17, 2024, 4:01:42&#8239;AM</div><div class="tx lk" style="left:675.8px">Task Log</div><div class="dlw" style="left:754.0px"><svg class="dl" viewBox="0 0 10 10"><path d="M5 0.6 V6.4 M2.6 4.2 L5 6.6 L7.4 4.2" stroke="#6c4ff2" stroke-width="1.25" fill="none" stroke-linecap="round" stroke-linejoin="round"/><path d="M0.5 9.4 H9.5" stroke="#7b62f2" stroke-width="1.1" stroke-linecap="round"/></svg></div><div class="tx lk r dt" style="left:879.75px;width:114.55px">Sep 11, 2024, 5:08:14&#8239;AM</div><div class="tx" style="left:1004.0px">Y10</div><div class="tx" style="left:1047.75px">2011</div><div class="tx clip" style="left:1104.0px;width:6.5px">01</div><svg class="nav" style="left:1118.1px" viewBox="0 0 6 8"><path d="M1.6 1.2 L4.4 4 L1.6 6.8" stroke="#0a6ed1" stroke-width="1.05" fill="none" stroke-linecap="round" stroke-linejoin="round"/></svg></div><div class="row" style="top:507.86px;height:20.69px"><div class="cb" style="left:9px;top:5.6px"></div><div class="st ok" style="left:29.7px"><svg class="si" viewBox="0 0 10 10"><circle cx="5" cy="5" r="5" fill="#30914c"/><path d="M2.6 5.1 L4.3 6.7 L7.4 3.5" stroke="#fff" stroke-width="1.3" fill="none" stroke-linecap="round" stroke-linejoin="round"/></svg>Success</div><div class="bar" style="left:89.0px"><i style="width:30%;background:#788ba3"></i><i style="width:70%;background:#2f8f4c"></i></div><div class="bar" style="left:169.0px"><i style="width:100%;background:#2f8f4c"></i></div><div class="bar" style="left:249.0px"><i style="width:100%;background:#2f8f4c"></i></div><div class="tx" style="left:329.0px">AUTO_RunCSV_01</div><div class="tx" style="left:436.0px">Selenium: Settings: Semico...</div><div class="tx lk r dt" style="left:555.5px;width:110.19999999999996px">Sep 17, 2024, 4:00:44&#8239;AM</div><div class="tx lk" style="left:675.8px">Task Log</div><div class="tx lk r dt" style="left:879.75px;width:114.55px">Sep 11, 2024, 5:07:06&#8239;AM</div><div class="tx" style="left:1004.0px">Y10</div><div class="tx" style="left:1047.75px">2011</div><div class="tx clip" style="left:1104.0px;width:6.5px">01</div><svg class="nav" style="left:1118.1px" viewBox="0 0 6 8"><path d="M1.6 1.2 L4.4 4 L1.6 6.8" stroke="#0a6ed1" stroke-width="1.05" fill="none" stroke-linecap="round" stroke-linejoin="round"/></svg></div><div class="row" style="top:528.55px;height:20.69px"><div class="cb" style="left:9px;top:5.6px"></div><div class="st ok" style="left:29.7px"><svg class="si" viewBox="0 0 10 10"><circle cx="5" cy="5" r="5" fill="#30914c"/><path d="M2.6 5.1 L4.3 6.7 L7.4 3.5" stroke="#fff" stroke-width="1.3" fill="none" stroke-linecap="round" stroke-linejoin="round"/></svg>Success</div><div class="bar" style="left:89.0px"><i style="width:100%;background:#2f8f4c"></i></div><div class="bar" style="left:169.0px"><i style="width:100%;background:#2f8f4c"></i></div><div class="tx" style="left:249.0px">N/A</div><div class="tx" style="left:329.0px">MAP-3632 manage m...</div><div class="tx" style="left:436.0px">MAP-3632 manage many v...</div><div class="tx lk r dt" style="left:555.5px;width:110.19999999999996px">Sep 16, 2024, 6:37:14&#8239;PM</div><div class="dlw" style="left:754.0px"><svg class="dl" viewBox="0 0 10 10"><path d="M5 0.6 V6.4 M2.6 4.2 L5 6.6 L7.4 4.2" stroke="#6c4ff2" stroke-width="1.25" fill="none" stroke-linecap="round" stroke-linejoin="round"/><path d="M0.5 9.4 H9.5" stroke="#7b62f2" stroke-width="1.1" stroke-linecap="round"/></svg></div><div class="dlw" style="left:834.25px"><svg class="dl" viewBox="0 0 10 10"><path d="M5 0.6 V6.4 M2.6 4.2 L5 6.6 L7.4 4.2" stroke="#6c4ff2" stroke-width="1.25" fill="none" stroke-linecap="round" stroke-linejoin="round"/><path d="M0.5 9.4 H9.5" stroke="#7b62f2" stroke-width="1.1" stroke-linecap="round"/></svg></div><div class="tx lk r dt" style="left:879.75px;width:114.55px">Sep 16, 2024, 6:37:14&#8239;PM</div><div class="tx" style="left:1004.0px">YB2</div><div class="tx" style="left:1047.75px">2016</div><div class="tx clip" style="left:1104.0px;width:6.5px">01</div><svg class="nav" style="left:1118.1px" viewBox="0 0 6 8"><path d="M1.6 1.2 L4.4 4 L1.6 6.8" stroke="#0a6ed1" stroke-width="1.05" fill="none" stroke-linecap="round" stroke-linejoin="round"/></svg></div><div class="row" style="top:549.24px;height:20.69px"><div class="cb" style="left:9px;top:5.6px"></div><div class="st er" style="left:29.7px"><svg class="si" viewBox="0 0 10 10"><circle cx="5" cy="5" r="5" fill="#ea1b1b"/><path d="M3.1 3.1 L6.9 6.9 M6.9 3.1 L3.1 6.9" stroke="#fff" stroke-width="1.45" fill="none" stroke-linecap="round"/></svg>Error</div><div class="bar" style="left:89.0px"><i style="width:100%;background:#2f8f4c"></i></div><div class="bar" style="left:169.0px"><i style="width:100%;background:#2f8f4c"></i></div><div class="bar" style="left:249.0px"><i style="width:49%;background:#f33134"></i><i style="width:51%;background:#2f8f4c"></i></div><div class="tx" style="left:329.0px">AUTO_CreateRun_AC...</div><div class="tx" style="left:436.0px">Selenium: Create and Run ...</div><div class="tx lk r dt" style="left:555.5px;width:110.19999999999996px">Sep 16, 2024, 4:59:28&#8239;PM</div><div class="tx lk" style="left:675.8px">Task Log</div><div class="tx" style="left:1004.0px">Y10</div><div class="tx" style="left:1047.75px">2010</div><div class="tx clip" style="left:1104.0px;width:6.5px">01</div><svg class="nav" style="left:1118.1px" viewBox="0 0 6 8"><path d="M1.6 1.2 L4.4 4 L1.6 6.8" stroke="#0a6ed1" stroke-width="1.05" fill="none" stroke-linecap="round" stroke-linejoin="round"/></svg></div><div class="row" style="top:569.9300000000001px;height:20.69px"><div class="cb" style="left:9px;top:5.6px"></div><div class="st er" style="left:29.7px"><svg class="si" viewBox="0 0 10 10"><circle cx="5" cy="5" r="5" fill="#ea1b1b"/><path d="M3.1 3.1 L6.9 6.9 M6.9 3.1 L3.1 6.9" stroke="#fff" stroke-width="1.45" fill="none" stroke-linecap="round"/></svg>Error</div><div class="bar" style="left:89.0px"><i style="width:100%;background:#2f8f4c"></i></div><div class="bar" style="left:169.0px"><i style="width:100%;background:#2f8f4c"></i></div><div class="bar" style="left:249.0px"><i style="width:25%;background:#f33134"></i><i style="width:75%;background:#2f8f4c"></i></div><div class="tx" style="left:329.0px">nodejs-job-3bc2cba2481</div><div class="tx" style="left:436.0px"></div><div class="tx lk r dt" style="left:555.5px;width:110.19999999999996px">Sep 16, 2024, 3:38:46&#8239;PM</div><div class="tx lk" style="left:675.8px">Task Log</div><div class="tx" style="left:1004.0px">Y10</div><div class="tx" style="left:1047.75px">2015</div><div class="tx clip" style="left:1104.0px;width:6.5px">01</div><svg class="nav" style="left:1118.1px" viewBox="0 0 6 8"><path d="M1.6 1.2 L4.4 4 L1.6 6.8" stroke="#0a6ed1" stroke-width="1.05" fill="none" stroke-linecap="round" stroke-linejoin="round"/></svg></div><div class="row" style="top:590.62px;height:20.69px"><div class="cb" style="left:9px;top:5.6px"></div><div class="st er" style="left:29.7px"><svg class="si" viewBox="0 0 10 10"><circle cx="5" cy="5" r="5" fill="#ea1b1b"/><path d="M3.1 3.1 L6.9 6.9 M6.9 3.1 L3.1 6.9" stroke="#fff" stroke-width="1.45" fill="none" stroke-linecap="round"/></svg>Error</div><div class="bar" style="left:89.0px"><i style="width:100%;background:#788ba3"></i></div><div class="bar" style="left:169.0px"><i style="width:100%;background:#f33134"></i></div><div class="bar" style="left:249.0px"><i style="width:100%;background:#f33134"></i></div><div class="tx" style="left:329.0px">nodejs-job-c4fcba57da3</div><div class="tx" style="left:436.0px"></div><div class="tx lk r dt" style="left:555.5px;width:110.19999999999996px">Sep 16, 2024, 3:02:47&#8239;PM</div><div class="tx" style="left:1004.0px">Y10</div><div class="tx" style="left:1047.75px">2015</div><div class="tx clip" style="left:1104.0px;width:6.5px">01</div><svg class="nav" style="left:1118.1px" viewBox="0 0 6 8"><path d="M1.6 1.2 L4.4 4 L1.6 6.8" stroke="#0a6ed1" stroke-width="1.05" fill="none" stroke-linecap="round" stroke-linejoin="round"/></svg></div><div class="row" style="top:611.31px;height:20.69px"><div class="cb" style="left:9px;top:5.6px"></div><div class="st er" style="left:29.7px"><svg class="si" viewBox="0 0 10 10"><circle cx="5" cy="5" r="5" fill="#ea1b1b"/><path d="M3.1 3.1 L6.9 6.9 M6.9 3.1 L3.1 6.9" stroke="#fff" stroke-width="1.45" fill="none" stroke-linecap="round"/></svg>Error</div><div class="bar" style="left:89.0px"><i style="width:100%;background:#788ba3"></i></div><div class="bar" style="left:169.0px"><i style="width:100%;background:#f33134"></i></div><div class="bar" style="left:249.0px"><i style="width:100%;background:#f33134"></i></div><div class="tx" style="left:329.0px">nodejs-job-bae081ed90f</div><div class="tx" style="left:436.0px"></div><div class="tx lk r dt" style="left:555.5px;width:110.19999999999996px">Sep 16, 2024, 2:51:37&#8239;PM</div><div class="tx" style="left:1004.0px">Y10</div><div class="tx" style="left:1047.75px">2015</div><div class="tx clip" style="left:1104.0px;width:6.5px">01</div><svg class="nav" style="left:1118.1px" viewBox="0 0 6 8"><path d="M1.6 1.2 L4.4 4 L1.6 6.8" stroke="#0a6ed1" stroke-width="1.05" fill="none" stroke-linecap="round" stroke-linejoin="round"/></svg></div><div class="row" style="top:632.0px;height:20.69px"><div class="cb" style="left:9px;top:5.6px"></div><div class="st er" style="left:29.7px"><svg class="si" viewBox="0 0 10 10"><circle cx="5" cy="5" r="5" fill="#ea1b1b"/><path d="M3.1 3.1 L6.9 6.9 M6.9 3.1 L3.1 6.9" stroke="#fff" stroke-width="1.45" fill="none" stroke-linecap="round"/></svg>Error</div><div class="bar" style="left:89.0px"><i style="width:100%;background:#788ba3"></i></div><div class="bar" style="left:169.0px"><i style="width:100%;background:#f33134"></i></div><div class="bar" style="left:249.0px"><i style="width:100%;background:#f33134"></i></div><div class="tx" style="left:329.0px">nodejs-job-a83ca685ded</div><div class="tx" style="left:436.0px"></div><div class="tx lk r dt" style="left:555.5px;width:110.19999999999996px">Sep 16, 2024, 2:49:57&#8239;PM</div><div class="tx" style="left:1004.0px">Y10</div><div class="tx" style="left:1047.75px">2015</div><div class="tx clip" style="left:1104.0px;width:6.5px">01</div><svg class="nav" style="left:1118.1px" viewBox="0 0 6 8"><path d="M1.6 1.2 L4.4 4 L1.6 6.8" stroke="#0a6ed1" stroke-width="1.05" fill="none" stroke-linecap="round" stroke-linejoin="round"/></svg></div><div class="row" style="top:652.69px;height:20.69px"><div class="cb" style="left:9px;top:5.6px"></div><div class="st er" style="left:29.7px"><svg class="si" viewBox="0 0 10 10"><circle cx="5" cy="5" r="5" fill="#ea1b1b"/><path d="M3.1 3.1 L6.9 6.9 M6.9 3.1 L3.1 6.9" stroke="#fff" stroke-width="1.45" fill="none" stroke-linecap="round"/></svg>Error</div><div class="bar" style="left:89.0px"><i style="width:100%;background:#788ba3"></i></div><div class="bar" style="left:169.0px"><i style="width:100%;background:#f33134"></i></div><div class="bar" style="left:249.0px"><i style="width:100%;background:#f33134"></i></div><div class="tx" style="left:329.0px">nodejs-job-12c389942e1</div><div class="tx" style="left:436.0px"></div><div class="tx lk r dt" style="left:555.5px;width:110.19999999999996px">Sep 16, 2024, 2:43:01&#8239;PM</div><div class="tx" style="left:1004.0px">Y10</div><div class="tx" style="left:1047.75px">2015</div><div class="tx clip" style="left:1104.0px;width:6.5px">01</div><svg class="nav" style="left:1118.1px" viewBox="0 0 6 8"><path d="M1.6 1.2 L4.4 4 L1.6 6.8" stroke="#0a6ed1" stroke-width="1.05" fill="none" stroke-linecap="round" stroke-linejoin="round"/></svg></div><div class="vl" style="left:53px"></div><div class="vl" style="left:112px"></div><div class="vl" style="left:192px"></div><div class="vl" style="left:272px"></div><div class="vl vd" style="left:352px"></div><div class="vl" style="left:459px"></div><div class="vl" style="left:584px"></div><div class="vl" style="left:699px"></div><div class="vl" style="left:748px"></div><div class="vl" style="left:828px"></div><div class="vl" style="left:908px"></div><div class="vl" style="left:1027px"></div><div class="vl" style="left:1071px"></div><div class="vl" style="left:1127px"></div><div class="vl vd" style="left:1139px"></div><div class="vl" style="left:1160px"></div><div class="hl" style="top:218px;width:1142px"></div><div class="hl" style="top:239px;width:1132px"></div><div class="hl" style="top:260px;width:1132px"></div><div class="hl" style="top:280px;width:1132px"></div><div class="hl" style="top:301px;width:1132px"></div><div class="hl" style="top:322px;width:1132px"></div><div class="hl" style="top:342px;width:1132px"></div><div class="hl" style="top:363px;width:1132px"></div><div class="hl" style="top:384px;width:1132px"></div><div class="hl" style="top:404px;width:1132px"></div><div class="hl" style="top:425px;width:1132px"></div><div class="hl" style="top:446px;width:1132px"></div><div class="hl" style="top:466px;width:1132px"></div><div class="hl" style="top:487px;width:1132px"></div><div class="hl" style="top:508px;width:1132px"></div><div class="hl" style="top:529px;width:1132px"></div><div class="hl" style="top:549px;width:1132px"></div><div class="hl" style="top:570px;width:1132px"></div><div class="hl" style="top:591px;width:1132px"></div><div class="hl" style="top:611px;width:1132px"></div><div class="hl" style="top:632px;width:1132px"></div><div class="hl" style="top:653px;width:1132px"></div><div class="hl" style="top:673px;width:1132px"></div>

<!-- scrollbars -->
<div class="a" style="left:1161.8px;top:229.3px;width:8.5px;height:23.3px;background:#7a8ca2;border-radius:0.5px"></div>
<svg class="a" style="left:1163.3px;top:222.8px" width="6" height="4" viewBox="0 0 6 4"><path d="M0.5 3.5 L3 0.8 L5.5 3.5 Z" fill="#7a8ca2"/></svg>
<svg class="a" style="left:1163px;top:666.5px" width="6" height="4" viewBox="0 0 6 4"><path d="M0.5 0.5 L3 3.2 L5.5 0.5 Z" fill="#7a8ca2"/></svg>
<div class="a" style="left:29px;top:672.9px;width:1142px;height:1.2px;background:#d9dde2"></div>
<div class="a" style="left:363px;top:675px;width:258px;height:8px;background:#7a8ca2;border-radius:1px"></div>
<svg class="a" style="left:357px;top:676.5px" width="4" height="6" viewBox="0 0 4 6"><path d="M3.5 0.5 L0.8 3 L3.5 5.5 Z" fill="#7a8ca2"/></svg>
<svg class="a" style="left:1133px;top:676.5px" width="4" height="6" viewBox="0 0 4 6"><path d="M0.5 0.5 L3.2 3 L0.5 5.5 Z" fill="#7a8ca2"/></svg>
</div>
</body></html>
